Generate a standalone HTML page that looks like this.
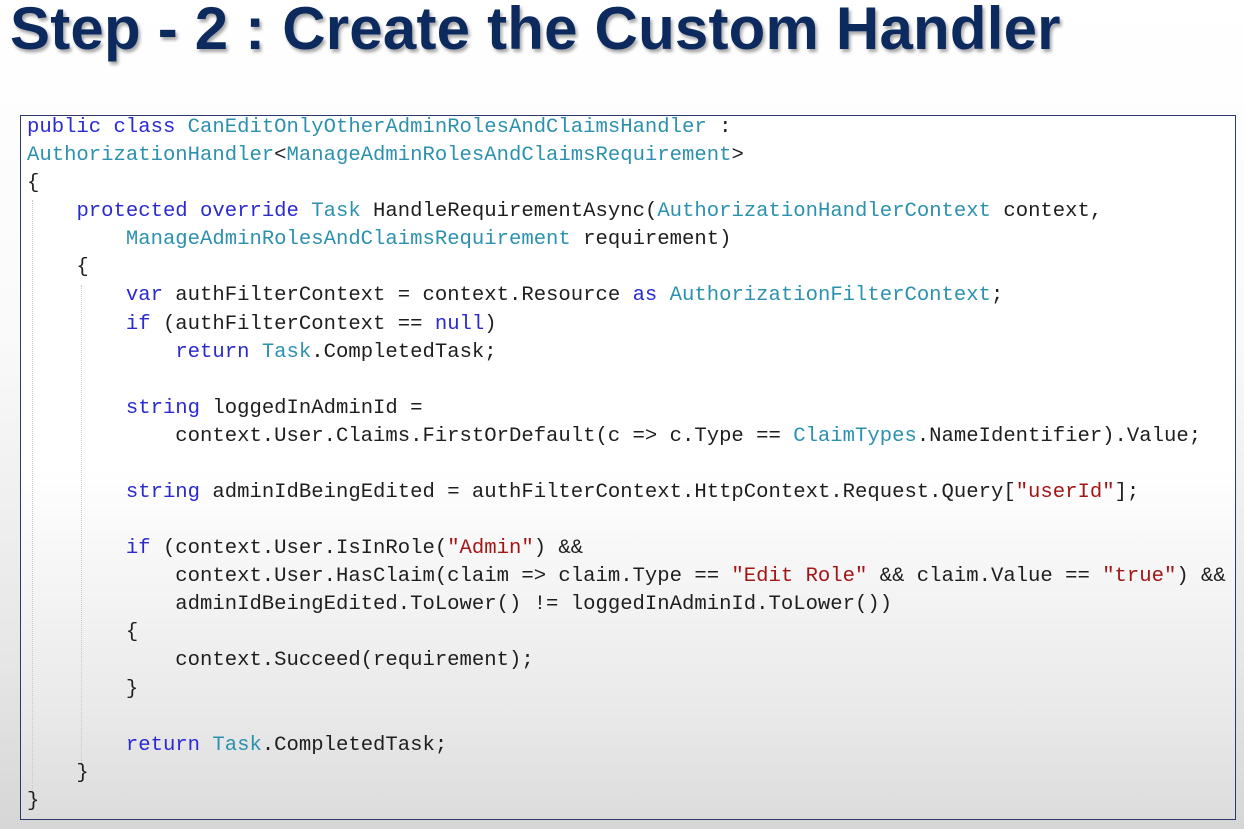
<!DOCTYPE html>
<html><head><meta charset="utf-8"><style>
html,body{margin:0;padding:0}
body{width:1244px;height:829px;overflow:hidden;position:relative;background:linear-gradient(#ffffff 0%,#fafafa 40%,#e6e6e6 80%,#d6d6d6 100%);font-family:"Liberation Sans",sans-serif}
h1{position:absolute;left:10px;top:-6px;margin:0;font-size:60px;font-weight:bold;color:#0d2a5e;letter-spacing:0.2px;text-shadow:2px 3px 3px rgba(0,0,0,0.35);white-space:nowrap}
.box{position:absolute;left:20px;top:115px;width:1216px;height:705px;border:1.5px solid #2a3a6a;box-sizing:border-box;background:linear-gradient(#ffffff 0%,#ffffff 50%,#e9e9e9 85%,#dcdcdc 100%)}
pre{position:absolute;left:27px;top:114px;margin:0;font-family:"Liberation Mono",monospace;font-size:20.6px;line-height:28.08px;color:#1e1e1e}
.k{color:#2a2ad0}.t{color:#2b91af}.s{color:#a31515}
.g{position:absolute;border-left:1px dotted #c8c8c8}
</style></head><body>
<h1>Step - 2 : Create the Custom Handler</h1>
<div class="box"></div>
<div class="g" style="left:32px;top:200px;height:600px"></div>
<div class="g" style="left:81px;top:285px;height:480px"></div>
<pre><span class="k">public</span> <span class="k">class</span> <span class="t">CanEditOnlyOtherAdminRolesAndClaimsHandler</span> :
<span class="t">AuthorizationHandler</span>&lt;<span class="t">ManageAdminRolesAndClaimsRequirement</span>&gt;
{
    <span class="k">protected</span> <span class="k">override</span> <span class="t">Task</span> HandleRequirementAsync(<span class="t">AuthorizationHandlerContext</span> context,
        <span class="t">ManageAdminRolesAndClaimsRequirement</span> requirement)
    {
        <span class="k">var</span> authFilterContext = context.Resource <span class="k">as</span> <span class="t">AuthorizationFilterContext</span>;
        <span class="k">if</span> (authFilterContext == <span class="k">null</span>)
            <span class="k">return</span> <span class="t">Task</span>.CompletedTask;

        <span class="k">string</span> loggedInAdminId =
            context.User.Claims.FirstOrDefault(c =&gt; c.Type == <span class="t">ClaimTypes</span>.NameIdentifier).Value;

        <span class="k">string</span> adminIdBeingEdited = authFilterContext.HttpContext.Request.Query[<span class="s">"userId"</span>];

        <span class="k">if</span> (context.User.IsInRole(<span class="s">"Admin"</span>) &amp;&amp;
            context.User.HasClaim(claim =&gt; claim.Type == <span class="s">"Edit Role"</span> &amp;&amp; claim.Value == <span class="s">"true"</span>) &amp;&amp;
            adminIdBeingEdited.ToLower() != loggedInAdminId.ToLower())
        {
            context.Succeed(requirement);
        }

        <span class="k">return</span> <span class="t">Task</span>.CompletedTask;
    }
}</pre>
</body></html>
